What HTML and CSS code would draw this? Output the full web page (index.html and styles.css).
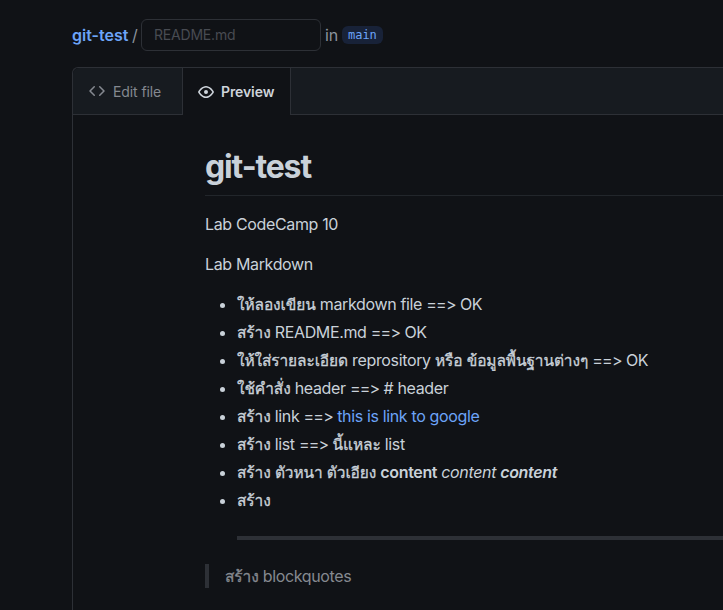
FILE: index.html
```html
<!DOCTYPE html>
<html lang="th">
<head>
<meta charset="utf-8">
<title>git-test</title>
<link rel="stylesheet" href="styles.css">
</head>
<body>
<header class="path">
  <a class="repo">git-test</a><span class="slash">/</span><div class="filename">README.md</div><span class="in">in</span><span class="branch">main</span>
</header>
<section class="editor">
  <nav class="tabs">
    <div class="tab"><svg class="icon" viewBox="0 0 16 16"><path d="M4.72 3.22a.75.75 0 0 1 1.06 1.06L2.06 8l3.72 3.72a.75.75 0 1 1-1.06 1.06L.47 8.53a.75.75 0 0 1 0-1.06zm6.56 0a.75.75 0 1 0-1.06 1.06L13.94 8l-3.72 3.72a.75.75 0 1 0 1.06 1.06l4.25-4.25a.75.75 0 0 0 0-1.06z"/></svg><span class="edit-label">Edit file</span></div>
    <div class="tab active"><svg class="icon" viewBox="0 0 16 16"><path fill-rule="evenodd" d="M1.679 7.932c.412-.621 1.242-1.75 2.366-2.717C5.175 4.242 6.527 3.5 8 3.5c1.473 0 2.824.742 3.955 1.715 1.124.967 1.954 2.096 2.366 2.717a.119.119 0 0 1 0 .136c-.412.621-1.242 1.75-2.366 2.717C10.825 11.758 9.473 12.5 8 12.5c-1.473 0-2.824-.742-3.955-1.715C2.92 9.818 2.09 8.69 1.679 8.068a.119.119 0 0 1 0-.136zM8 2c-1.981 0-3.67.992-4.933 2.078C1.797 5.169.88 6.423.43 7.1a1.619 1.619 0 0 0 0 1.798c.45.678 1.367 1.932 2.637 3.024C4.329 13.008 6.019 14 8 14c1.981 0 3.67-.992 4.933-2.078 1.27-1.091 2.187-2.345 2.637-3.023a1.619 1.619 0 0 0 0-1.798c-.45-.678-1.367-1.932-2.637-3.023C11.671 2.992 9.981 2 8 2zm0 8a2 2 0 1 0 0-4 2 2 0 0 0 0 4z"/></svg><span>Preview</span></div>
  </nav>
  <article class="doc">
    <h1>git-test</h1>
    <p>Lab CodeCamp 10</p>
    <p>Lab Markdown</p>
    <ul>
      <li><span class="th">ให้ลองเขียน</span> markdown file <span class="arrow">==&gt;</span> OK</li>
      <li><span class="th">สร้าง</span> README.md <span class="arrow">==&gt;</span> OK</li>
      <li><span class="th">ให้ใส่รายละเอียด</span> reprository <span class="th">หรือ ข้อมูลพื้นฐานต่างๆ</span> <span class="arrow">==&gt;</span> OK</li>
      <li><span class="th">ใช้คำสั่ง</span> header <span class="arrow">==&gt;</span> # header</li>
      <li><span class="th">สร้าง</span> link <span class="arrow">==&gt;</span> <a>this is link to google</a></li>
      <li><span class="th">สร้าง</span> list <span class="arrow">==&gt;</span> <span class="th">นี้แหละ</span> list</li>
      <li><span class="th">สร้าง ตัวหนา ตัวเอียง</span> <b>content</b> <i>content</i> <b><i>content</i></b></li>
      <li><span class="th">สร้าง</span><hr></li>
    </ul>
    <blockquote><span class="th">สร้าง</span> blockquotes</blockquote>
  </article>
</section>
</body>
</html>
```
FILE: styles.css
```css
*{box-sizing:border-box}
html{overflow:hidden}
body{margin:0;height:610px;overflow:hidden;background:#101216;color:#c9d1d9;font-family:Inter,"Noto Sans",sans-serif;font-size:16px;line-height:24px;font-feature-settings:"calt" 0}
.path{height:67px;padding:19px 0 16px 72px;display:flex;align-items:center;white-space:nowrap;color:#8b949e}
.repo{color:#6ca4f8;font-weight:600;width:57px}
.slash{width:12px;padding-left:3px}
.filename{width:180px;height:32px;border:1px solid #2d3036;border-radius:6px;padding:0 12px;font-size:14px;line-height:30px;color:#484b52;letter-spacing:-.2px}
.in{margin:0 4px 0 4px;letter-spacing:-.2px}
.branch{font:12px/18px "DejaVu Sans Mono",monospace;color:#6ca4f8;background:#182238;border-radius:6px;padding:0 6px}
.editor{margin-left:72px;height:543px;border:1px solid #2d3036;border-width:1px 0 0 1px;border-radius:6px 0 0}
.tabs{height:47px;background:#171b20;border-bottom:1px solid #2d3036;display:flex;border-radius:6px 0 0}
.tab{display:flex;align-items:center;width:109px;padding-left:16px;gap:8px;font-size:14px;letter-spacing:-.1px;color:#858990}
.edit-label{padding-top:2px}
.active{width:109px;height:47px;padding-left:15px;gap:7px;background:#101216;border:1px solid #2d3036;border-width:0 1px;color:#ced4db;font-weight:600}
.icon{width:16px;height:16px;fill:currentColor;flex:none}
.doc{padding:32px 0 0 132px;white-space:nowrap;letter-spacing:-.35px}
h1{margin:0 0 16px;height:49px;border-bottom:1px solid #22262b;font-size:32px;line-height:40px;font-weight:700;letter-spacing:-1.15px}
p{margin:0 0 16px}
ul{margin:0;padding-left:32px}
li{height:24px;margin-bottom:4px}
li:last-child{height:60px;margin-bottom:16px}
.th{font-family:Loma,"Noto Sans Thai Looped",Waree,Garuda,sans-serif;font-size:15.5px;line-height:20px;letter-spacing:-.12px;word-spacing:-.8px;-webkit-text-stroke:.3px currentColor}
.arrow{letter-spacing:-.75px}
b{font-weight:600}
a{color:#6ca4f8}
hr{height:4px;border:0;background:#2d3036;margin:24px 0 0}
blockquote{margin:0;height:24px;padding-left:16px;border-left:4px solid #2d3036;color:#858990}
```
